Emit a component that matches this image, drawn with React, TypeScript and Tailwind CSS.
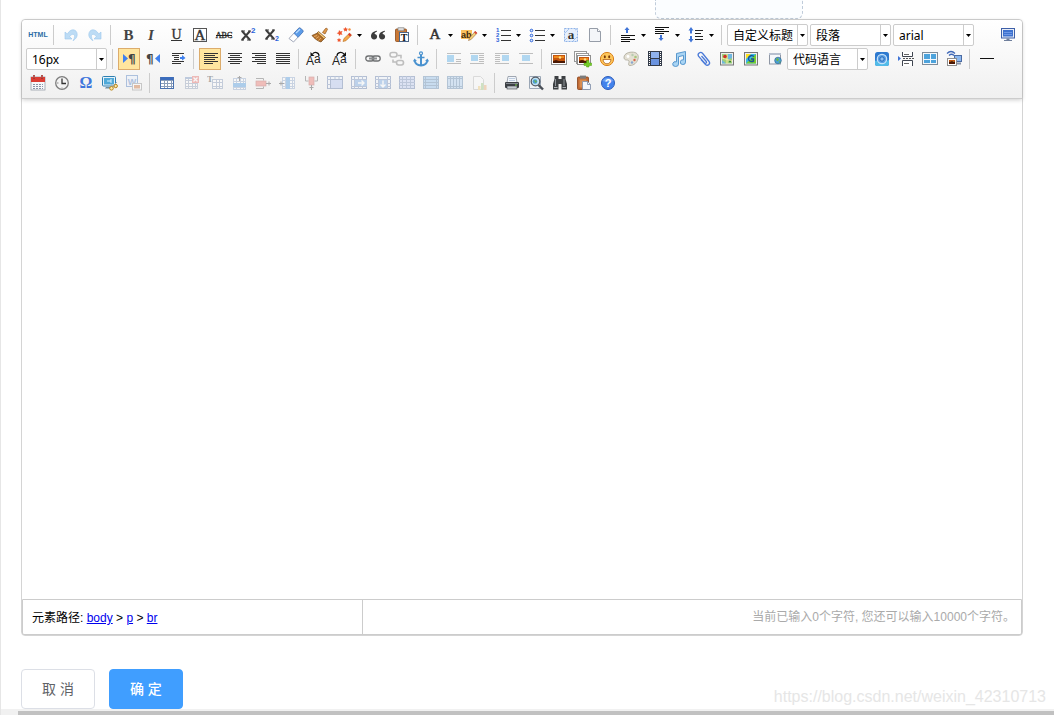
import React, { useState } from "react";
import clsx from "clsx";

type IconMap = Record<string, React.ReactNode>;

const serif = '"Liberation Serif", serif';
const sans = '"Liberation Sans", sans-serif';

// Horizontal 1px strokes, given as [x, y, width]
const Lines = ({ rows, color = "#333" }: { rows: number[][]; color?: string }) => (
  <>
    {rows.map(([x, y, w], i) => (
      <rect key={i} x={x} y={y} width={w} height={1} fill={color} />
    ))}
  </>
);

// Base sheet shared by the table commands
const Sheet = ({ x = 2, y = 2, w = 14, h = 12, cols = 4, rows = 4, fill = "#fff", line = "#5b7fb5" }) => (
  <>
    <rect x={x + 0.5} y={y + 0.5} width={w - 1} height={h - 1} fill={fill} stroke={line} />
    {Array.from({ length: cols - 1 }, (_, i) => {
      const px = x + Math.round(((i + 1) * w) / cols) + 0.5;
      return <path key={`c${i}`} d={`M${px} ${y}V${y + h}`} stroke={line} />;
    })}
    {Array.from({ length: rows - 1 }, (_, i) => {
      const py = y + Math.round(((i + 1) * h) / rows) + 0.5;
      return <path key={`r${i}`} d={`M${x} ${py}H${x + w}`} stroke={line} />;
    })}
  </>
);

// Outer frame with a thin header row, used by the merge and split commands
const Frame = ({ fill = "#eef4ff" }) => (
  <>
    <rect x=".5" y="1.5" width="15" height="12" fill={fill} stroke="#3f5f98" />
    <path d="M0 4.5h16M3.5 1v13" stroke="#5a78ad" />
  </>
);

const Sunset = ({ x, y, w = 15, h = 11 }: { x: number; y: number; w?: number; h?: number }) => (
  <g>
    <rect x={x + 0.5} y={y + 0.5} width={w - 1} height={h - 1} fill="#fff" stroke="#8f8f8f" />
    <rect x={x + 2} y={y + 2} width={w - 4} height={h - 4} fill="#c4560f" />
    <rect x={x + 3} y={y + 3} width={w - 6} height={2} fill="#f08a1c" />
    <circle cx={x + w / 2 + 1} cy={y + 4.5} r={1.2} fill="#ffe08a" />
    <path d={`M${x + 2} ${y + h - 4}l3 -1 3 1h${w - 10}v2H${x + 2}z`} fill="#4a1703" />
  </g>
);

const icons: IconMap = {
  undo: (
    <path d="M2 5v7h7L6.700 9.600C8.500 6.500 11.800 6.500 11.600 9.500c-.1 1.600-.7 2.900-1.600 4.200 3.500-2 5-5.200 3.800-8.200C12.300 1.800 7.500 1.500 4.300 7z" fill="#bddcf5" stroke="#9cc8ec" strokeWidth=".6" />
  ),
  redo: (
    <path d="M14 5v7H7l2.300-2.400C7.500 6.500 4.200 6.500 4.400 9.500c.1 1.600.7 2.900 1.600 4.200C2.500 11.700 1 8.500 2.200 5.500 3.700 1.800 8.500 1.500 11.700 7z" fill="#bddcf5" stroke="#9cc8ec" strokeWidth=".6" />
  ),
  bold: <text x="8.500" y="13" textAnchor="middle" fontFamily={serif} fontWeight="700" fontSize="15" fill="#444">B</text>,
  italic: <text x="7" y="13" textAnchor="middle" fontFamily={serif} fontStyle="italic" fontWeight="700" fontSize="15" fill="#444">I</text>,
  underline: (
    <>
      <text x="8.500" y="12" textAnchor="middle" fontFamily={serif} fontSize="14" fill="#333" stroke="#333" strokeWidth=".3">U</text>
      <rect x="3" y="13" width="11" height="1" fill="#333" />
    </>
  ),
  fontborder: (
    <>
      <rect x="1.500" y="1.500" width="13" height="13" fill="#fff" stroke="#555" />
      <text x="8" y="13" textAnchor="middle" fontFamily={serif} fontSize="15" fill="#333" stroke="#333" strokeWidth=".4">A</text>
    </>
  ),
  strike: (
    <>
      <text x="8" y="11" textAnchor="middle" fontFamily={serif} fontSize="8" fill="#333" stroke="#333" strokeWidth=".4">ABC</text>
      <rect x="0" y="8" width="16" height="1" fill="#222" />
    </>
  ),
  superscript: (
    <>
      <path d="M2 4l8 9M10 4l-8 9" stroke="#3c3c3c" strokeWidth="2" />
      <path d="M1 4h4M8 4h3M1 13h3M7 13h4" stroke="#3c3c3c" />
      <text x="11" y="6" fontFamily={sans} fontWeight="700" fontSize="8" fill="#2b62d9">2</text>
    </>
  ),
  subscript: (
    <>
      <path d="M2 3l8 9M10 3l-8 9" stroke="#3c3c3c" strokeWidth="2" />
      <path d="M1 3h4M8 3h3M1 12h3M7 12h4" stroke="#3c3c3c" />
      <text x="11" y="14" fontFamily={sans} fontWeight="700" fontSize="7" fill="#2b62d9">2</text>
    </>
  ),
  eraser: (
    <g strokeWidth=".8">
      <path d="M1 11.500L10.500 1.300q1-.8 2 0l2 2q.8 1 0 2L5.500 15z" fill="#fff" stroke="#8a93a8" />
      <path d="M6 6.300L10.700 1.300q1-.8 2 0l2 2q.8 1 0 2l-4.600 5z" fill="#5b9be8" stroke="#4677be" />
      <path d="M8 6l4-3.800" stroke="#b8dcff" strokeWidth="1.200" />
    </g>
  ),
  formatmatch: (
    <g>
      <path d="M10.500 5.500L13.500 1.500q1.500-1 2 .8L13 7z" fill="#e19a4a" stroke="#8f541d" strokeWidth=".7" />
      <path d="M6.500 4.500l7 6-1.800 1.700-6.700-6z" fill="#f3c676" stroke="#7d4a18" strokeWidth=".7" />
      <path d="M5.500 6L0 8.500c2.500 3 5.500 5.500 9 6.500l2.800-3z" fill="#b9742d" stroke="#70400f" strokeWidth=".7" />
      <path d="M2 9.500l3-1M4 11.500l3-2M6.500 13.500l2.500-2.500" stroke="#e9b673" strokeWidth=".8" />
    </g>
  ),
  autotypeset: (
    <g>
      <path d="M7 14.500l1-3 5.500-5.300 2 2L10 13.700z" fill="#f6a94b" stroke="#b56d1e" strokeWidth=".6" />
      <path d="M12 7.500l1.500-1.500 2 2L14 9.500z" fill="#d83a2a" />
      <g fill="#f0552d">
        <path d="M3 3l1.300 1.600L6.500 4l-1 2 1 1.800-2.200-.4L3 9l-.3-2L.6 6.200l2-1z" />
        <path d="M9.500 0l.8 1.500 1.700.2-1.200 1.200.3 1.700-1.600-.8-1.500.8.3-1.700L7 1.700l1.700-.2z" />
        <path d="M3 11l.8 1.200 1.500.2-1 1 .2 1.500-1.500-.6-1.300.6.2-1.500-1-1 1.400-.2z" />
      </g>
      <circle cx="13.500" cy="2.500" r="1.200" fill="#f28b3a" />
    </g>
  ),
  blockquote: (
    <g fill="#3c3c3c">
      <path d="M7 3.800C3.200 4.300 1 6.400 1 9.300c0 2 1.300 3.200 3.100 3.200 1.700 0 3-1.200 3-2.800 0-1.500-1.100-2.500-2.600-2.600C4.800 6 5.600 5 7 4.500z" />
      <path d="M15 3.800c-3.800.5-6 2.600-6 5.500 0 2 1.300 3.200 3.100 3.200 1.700 0 3-1.200 3-2.800 0-1.500-1.100-2.500-2.600-2.600.3-1.100 1.100-2.100 2.500-2.600z" />
    </g>
  ),
  pasteplain: (
    <g>
      <rect x="1.500" y="2" width="11" height="12.500" rx="1" fill="#c97835" stroke="#8a4a1a" strokeWidth=".8" />
      <rect x="4" y=".8" width="6" height="3" fill="#dcdcdc" stroke="#777" strokeWidth=".6" />
      <rect x="5.500" y="5.500" width="9" height="9" fill="#fff" stroke="#4d6688" />
      <text x="10" y="13.500" textAnchor="middle" fontFamily={serif} fontWeight="700" fontSize="10" fill="#111">T</text>
    </g>
  ),
  forecolor: <text x="8" y="12" textAnchor="middle" fontFamily={serif} fontSize="15" fill="#333" stroke="#333" strokeWidth=".5">A</text>,
  backcolor: (
    <g>
      <rect x="0" y="3" width="11" height="9" fill="#fbc15e" />
      <text x="0" y="11" fontFamily={sans} fontWeight="700" fontSize="9" fill="#3b2a10">ab</text>
      <path d="M7.500 13.500l1-2.500 5.500-6.500 2 1.700-5.800 6.200z" fill="#f4d27a" stroke="#9a6a3a" strokeWidth=".6" />
      <path d="M13 5.500l1.200-1.500 2 1.700-1.200 1.500z" fill="#d9473b" />
    </g>
  ),
  orderedlist: (
    <>
      <g fontFamily={sans} fontWeight="700" fontSize="6" fill="#2b62d9">
        <text x="1" y="5">1</text>
        <text x="1" y="10">2</text>
        <text x="1" y="15">3</text>
      </g>
      <Lines rows={[[6, 3, 10], [6, 8, 10], [6, 13, 10]]} />
    </>
  ),
  unorderedlist: (
    <>
      {[3, 8, 13].map((cy) => (
        <circle key={cy} cx="2.500" cy={cy + 0.5} r="1.300" fill="#dbe8ff" stroke="#2b62d9" />
      ))}
      <Lines rows={[[6, 3, 10], [6, 8, 10], [6, 13, 10]]} />
    </>
  ),
  selectall: (
    <>
      <rect x="1.500" y="1.500" width="13" height="13" fill="#e6effc" stroke="#8fb3e8" strokeDasharray="2 1" />
      <path d="M2 6l4-4M10 14l4-4M2 13l2-2M12 3l2-1" stroke="#a7c4ee" />
      <text x="8" y="12" textAnchor="middle" fontFamily={serif} fontWeight="700" fontSize="13" fill="#333">a</text>
    </>
  ),
  cleardoc: (
    <g>
      <path d="M2.500 1.500h8l3 3v10h-11z" fill="#f4f6f9" stroke="#969da8" />
      <path d="M10.500 1.500v3h3" fill="#fff" stroke="#969da8" />
    </g>
  ),
  rowspacingtop: (
    <>
      <path d="M7 0l2.500 3H8v3H6V3H4.500z" fill="#3f74d6" />
      <Lines color="#111" rows={[[1, 8, 14], [1, 10, 9], [1, 12, 14], [1, 14, 9]]} />
    </>
  ),
  rowspacingbottom: (
    <>
      <Lines color="#111" rows={[[1, 0, 14], [1, 2, 9], [1, 4, 14], [1, 6, 9]]} />
      <path d="M7 14l2.500-3H8V8H6v3H4.500z" fill="#3f74d6" />
    </>
  ),
  lineheight: (
    <>
      <path d="M3 0l2.500 3.500H4v3H2v-3H.5zM3 15.500L5.500 12H4V9H2v3H.5z" fill="#3f74d6" />
      <Lines color="#222" rows={[[7, 3, 8], [7, 6, 6], [7, 9, 8], [7, 12, 8]]} />
    </>
  ),
  fullscreen: (
    <g>
      <rect x="1.500" y="1.500" width="13" height="9.500" fill="#e8edf6" stroke="#3d5fa8" />
      <rect x="3" y="3" width="10" height="6.500" fill="#3f72cf" />
      <path d="M4 5.500h8M4 7.500h8" stroke="#6d97e6" />
      <path d="M6.500 11.500h3v1.500h2.500v1H4v-1h2.500z" fill="#6f7f9c" />
    </g>
  ),
  ltr: (
    <>
      <path d="M1 3v9l5-4.500z" fill="#3f80ee" />
      <text x="6" y="12" fontFamily='"DejaVu Sans", sans-serif' fontWeight="700" fontSize="12" fill="#444">¶</text>
    </>
  ),
  rtl: (
    <>
      <text x="0" y="12" fontFamily='"DejaVu Sans", sans-serif' fontWeight="700" fontSize="12" fill="#444">¶</text>
      <path d="M14 3v9l-5-4.500z" fill="#3f80ee" />
    </>
  ),
  indent: (
    <>
      <Lines rows={[[2, 2, 12], [2, 4, 7], [4, 6, 5], [4, 8, 5], [2, 10, 12], [2, 12, 9]]} />
      <path d="M10 6h2V4l3.500 3L12 9.500V8h-2z" fill="#3f80ee" />
    </>
  ),
  justifyleft: <Lines rows={[[1, 2, 14], [1, 4, 11], [1, 6, 14], [1, 8, 11], [1, 10, 14], [1, 12, 9]]} />,
  justifycenter: <Lines rows={[[1, 2, 14], [3, 4, 10], [1, 6, 14], [3, 8, 10], [1, 10, 14], [3, 12, 10]]} />,
  justifyright: <Lines rows={[[1, 2, 14], [4, 4, 11], [1, 6, 14], [4, 8, 11], [1, 10, 14], [6, 12, 9]]} />,
  justifyfull: <Lines rows={[[1, 2, 14], [1, 4, 14], [1, 6, 14], [1, 8, 14], [1, 10, 14], [1, 12, 14]]} />,
  touppercase: (
    <g fontFamily={sans} fill="#222">
      <text x="-2" y="14" fontSize="12">A</text>
      <text x="6" y="12" fontSize="12">a</text>
      <path d="M11 5C11 1 6.500 .5 4.500 3" fill="none" stroke="#111" strokeWidth="1.200" />
      <path d="M2.500 1v4h4z" fill="#111" />
    </g>
  ),
  tolowercase: (
    <g fontFamily={sans} fill="#222">
      <text x="0" y="14" fontSize="12">A</text>
      <text x="8" y="12" fontSize="12">a</text>
      <path d="M5 5C5 1 9.500 .5 12 3" fill="none" stroke="#111" strokeWidth="1.200" />
      <path d="M14 1v4h-4z" fill="#111" />
    </g>
  ),
  link: (
    <g fill="none" stroke="#6e7072" strokeWidth="1.300">
      <rect x=".8" y="5" width="8" height="5" rx="2.500" />
      <rect x="7.200" y="5" width="8" height="5" rx="2.500" />
      <path d="M4 7.500h8" stroke="#8c8e90" strokeWidth="2" />
    </g>
  ),
  unlink: (
    <g fill="none" stroke="#555" strokeWidth="1.600">
      <rect x="1" y="1.500" width="7" height="4.500" rx="2.200" />
      <rect x="7.500" y="9.500" width="7" height="4.500" rx="2.200" />
      <path d="M4 8.500v2.500h3M8.500 4.500H12v3" />
    </g>
  ),
  anchor: (
    <g fill="none" stroke="#4a92cf">
      <circle cx="8" cy="2.300" r="1.500" strokeWidth="1.200" />
      <path d="M8 4v10.500" strokeWidth="2" />
      <path d="M4.500 6.500h7" strokeWidth="1.500" />
      <path d="M1.500 9c.5 3.500 3 5.300 6.500 5.500 3.500-.2 6-2 6.500-5.500" strokeWidth="1.800" />
      <path d="M0 10.500L1.500 7.500 4 10zM16 10.500l-1.500-3L12 10z" fill="#4a92cf" stroke="none" />
    </g>
  ),
  imagenone: (
    <>
      <Lines color="#555" rows={[[1, 2, 14], [10, 8, 5], [10, 10, 5], [1, 12, 14]]} />
      <rect x="1" y="4" width="7" height="7" fill="#2f9be4" />
    </>
  ),
  imageleft: (
    <>
      <Lines color="#555" rows={[[0, 2, 14], [9, 4, 5], [9, 6, 5], [9, 8, 5], [9, 10, 5], [0, 12, 14]]} />
      <rect x="1" y="4" width="7" height="6" fill="#2f9be4" />
    </>
  ),
  imageright: (
    <>
      <Lines color="#555" rows={[[1, 2, 14], [1, 4, 5], [1, 6, 5], [1, 8, 5], [1, 10, 5], [1, 12, 14]]} />
      <rect x="8" y="4" width="7" height="6" fill="#2f9be4" />
    </>
  ),
  imagecenter: (
    <>
      <Lines color="#555" rows={[[1, 2, 14], [1, 12, 14]]} />
      <rect x="4" y="4" width="8" height="6" fill="#2f9be4" />
    </>
  ),
  simpleupload: <Sunset x={0} y={2} w={16} h={12} />,
  insertimage: (
    <>
      <rect x="-.5" y=".5" width="12" height="10" fill="#fff" stroke="#999" />
      <rect x="1.500" y="2.500" width="12" height="10" fill="#fff" stroke="#999" />
      <Sunset x={2} y={4} w={14} h={10} />
      <path d="M11.500 9.500h2.500V12h2.500v2.500H14V16h-2.500v-1.500H9V12h2.500z" fill="#74cc26" stroke="#4f9c12" strokeWidth=".5" />
    </>
  ),
  emotion: (
    <g>
      <circle cx="8" cy="8" r="6.600" fill="#fdc65b" stroke="#d9801b" />
      <path d="M4 8.500h8c-.2 2.600-2 4.300-4 4.300s-3.800-1.700-4-4.300z" fill="#fff" stroke="#a5520c" strokeWidth=".7" />
      <ellipse cx="5.800" cy="5.800" rx="1" ry="1.500" fill="#7a3a06" />
      <ellipse cx="10.200" cy="5.800" rx="1" ry="1.500" fill="#7a3a06" />
    </g>
  ),
  scrawl: (
    <g>
      <path d="M1 6C1.500 2.500 6 .7 10.500 1.200 14.500 1.700 16 4.500 15 8c-1 3.500-4 6.500-8 6.500-2 0-1.500-1.800-1-3.200C6.500 9.500 5 9 3.500 9 1.800 9 .8 7.700 1 6z" fill="#e4e0d3" stroke="#aaa798" strokeWidth=".8" />
      <circle cx="5" cy="5.500" r="1.400" fill="#fff" />
      <circle cx="9.500" cy="4" r="1.200" fill="#b9ccb0" />
      <circle cx="12.500" cy="6" r="1.300" fill="#a8c67c" />
      <circle cx="11.500" cy="9" r="1.200" fill="#d9664d" />
      <circle cx="9" cy="11.500" r="1.200" fill="#8aa7cf" />
    </g>
  ),
  insertvideo: (
    <g>
      <rect x="1" y="0" width="14" height="15" fill="#333b49" />
      <path d="M2.500 1v14M13.500 1v14" stroke="#fff" strokeDasharray="1 1" />
      <rect x="4" y="1" width="8" height="6" fill="#8fb2ee" />
      <rect x="4" y="8" width="8" height="6" fill="#6a93df" />
    </g>
  ),
  music: (
    <path d="M5.500 2.500l9-2v10.500a2.600 2.400 0 1 1-2-2.200V4.500l-5 1.200V13a2.900 2.400 0 1 1-2-2.200z" fill="#a9d4f3" stroke="#4b8fca" strokeWidth=".9" />
  ),
  attachment: (
    <g fill="none" stroke="#4a7ad8" strokeWidth="1.300">
      <path d="M6 8.500l4.500 5c2.200 2 5.200-.6 3.600-3L7.500 2.300C5.500.3 2 2.500 3.500 5.200l6 6.800c1.200 1 2.700-.2 1.800-1.500L6.500 5" />
    </g>
  ),
  map: (
    <g>
      <rect x="1.500" y="1.500" width="13" height="12.500" fill="#eee" stroke="#777" />
      <rect x="3" y="3" width="10" height="9.500" fill="#9fd07a" />
      <path d="M9 3h4v4L9 9zM3 9l4 3.500H3z" fill="#6fb6e0" />
      <path d="M3 7l10 3M8 3v9.500" stroke="#f8e9a0" />
      <circle cx="6" cy="5.500" r="1.800" fill="#d22f27" />
      <circle cx="11" cy="10.500" r="1" fill="#2d7f38" />
    </g>
  ),
  gmap: (
    <g>
      <rect x="1.500" y="1.500" width="13" height="12.500" fill="#eee" stroke="#777" />
      <rect x="3" y="3" width="10" height="9.500" fill="#38b7e8" />
      <path d="M3 12.500L13 3v9.500z" fill="#76cf2d" />
      <path d="M3 3h5L3 8z" fill="#ffe11a" />
      <path d="M11 5.500c-2-1.500-5-1-5.500 1.800C5.200 10 8 11.200 10.500 10V8H8" fill="none" stroke="#1a5299" strokeWidth="1.400" />
    </g>
  ),
  insertframe: (
    <g>
      <rect x="2.500" y="2.500" width="11" height="10.500" fill="#f6f8fb" stroke="#8f97a5" />
      <path d="M2 3h12" stroke="#b7c0cf" strokeWidth="2" />
      <circle cx="11" cy="9.500" r="3.300" fill="#4aa0d8" stroke="#33688f" strokeWidth=".7" />
      <path d="M9 8l2-1 1 2-2 1.500zM11.500 11l2-1-.5 2z" fill="#6bb544" />
    </g>
  ),
  webapp: (
    <g>
      <rect x="1" y="1" width="14" height="14" rx="2.500" fill="#2d79cf" />
      <path d="M1 10c3-2 5 3 14-1v3.500A2.500 2.500 0 0 1 12.500 15h-9A2.500 2.500 0 0 1 1 12.500z" fill="#52bbe8" />
      <circle cx="8" cy="8" r="4.700" fill="#5a9fe4" stroke="#c4e2fa" strokeWidth="1.200" />
      <circle cx="8" cy="8" r="2.200" fill="#8cc1f3" stroke="#2465b5" />
    </g>
  ),
  pagebreak: (
    <g fill="none">
      <path d="M4.500 1v4.500h10V1M4.500 15V9.500h10V15" fill="#fff" stroke="#3f4550" />
      <path d="M6 3.500h5M6 12.500h5" stroke="#666" />
      <path d="M5 7.500h11" stroke="#555" strokeDasharray="2 1" />
      <path d="M0 5l3 2.500L0 10z" fill="#3f74d6" />
    </g>
  ),
  template: (
    <g>
      <rect x=".5" y="1.500" width="15" height="12" fill="#f3f8fc" stroke="#7f8c99" />
      <path d="M2 3h6v5H2zM9 3h5v5H9zM2 9h6v3H2zM9 9h5v3H9z" fill="#4da3dc" />
    </g>
  ),
  background: (
    <g>
      <path d="M1 2.500Q5-1.500 9 2.500M3 4.500q2.500-2.500 5 0" fill="none" stroke="#4069b8" strokeWidth="1.200" />
      <rect x="8.500" y="4.500" width="7" height="6" fill="#8cb8ee" stroke="#4b6ba3" />
      <path d="M11 12.500h4" stroke="#8793a8" strokeWidth="2" />
      <Sunset x={1} y={7} w={10} h={8} />
    </g>
  ),
  horizontal: <rect x="1" y="7" width="14" height="1" fill="#111" />,
  date: (
    <g>
      <rect x="1" y="2" width="14" height="13" fill="#f6f7fa" stroke="#9aa0ab" strokeWidth=".8" />
      <rect x="1" y="2" width="14" height="5" fill="#dc3d34" />
      <path d="M4 0v4M12 0v4" stroke="#8d1a15" strokeWidth="1.600" />
      <path d="M4 .5v3M12 .5v3" stroke="#f7b0aa" strokeWidth=".6" />
      <path d="M3 9.500h10M3 11.500h10M3 13.500h10" stroke="#8b95a8" strokeDasharray="2 1" />
    </g>
  ),
  time: (
    <g>
      <circle cx="8" cy="8" r="6.300" fill="#f3f3f3" stroke="#7d7d7d" strokeWidth="1.300" />
      <path d="M8 3.500v5h4" fill="none" stroke="#333" strokeWidth="1.300" />
      <path d="M8 12.500v1M3 8h1.500" stroke="#888" />
    </g>
  ),
  spechars: (
    <text x="8" y="13" textAnchor="middle" fontFamily={serif} fontWeight="700" fontSize="16" fill="#3f76dc">Ω</text>
  ),
  snapscreen: (
    <g>
      <rect x=".5" y="1.500" width="13" height="9.500" rx="1" fill="#e6f2fa" stroke="#2e7fb0" />
      <rect x="2" y="3" width="10" height="6.500" fill="#4fa9d8" />
      <path d="M5 6h4V4M9 6v2" stroke="#d8f1ff" fill="none" />
      <path d="M4 12h5v1.500H3z" fill="#6f8fa5" />
      <path d="M15 7l-5 5M9 9.500l5 3" stroke="#a8b0b8" />
      <circle cx="9.500" cy="13.300" r="1.800" fill="#ffe8a8" stroke="#b98618" />
      <circle cx="13.700" cy="11" r="1.700" fill="#ffe8a8" stroke="#b98618" />
    </g>
  ),
  wordimage: (
    <g>
      <rect x=".5" y=".5" width="11" height="11" fill="#e4efff" stroke="#2c63b4" />
      <text x="6" y="9.500" textAnchor="middle" fontFamily={sans} fontWeight="700" fontSize="9" fill="#2c63b4">W</text>
      <rect x="6.500" y="8.500" width="9" height="6.500" fill="#fff" stroke="#777" />
      <rect x="8" y="10" width="6" height="3.500" fill="#c4560f" />
    </g>
  ),
  inserttable: (
    <>
      <Sheet x={1} w={14} cols={4} rows={4} line="#8a9db8" />
      <rect x="1" y="2" width="14" height="3" fill="#3b6cbc" />
      <path d="M1.500 2v12M14.500 2v12M1 13.500h14" stroke="#4a72b0" />
    </>
  ),
  deletetable: (
    <>
      <Sheet w={13} line="#7a8cab" />
      <rect x="2" y="2" width="13" height="2" fill="#5b7fb5" />
      <rect x="9" y="1" width="7" height="7" fill="#e2504a" />
      <path d="M10.500 2.500l4 4M14.500 2.500l-4 4" stroke="#fff" strokeWidth="1.300" />
    </>
  ),
  beforetable: (
    <>
      <text x="0" y="7" fontFamily={serif} fontWeight="700" fontSize="9" fill="#111">T</text>
      <Sheet x={5} y={4} w={11} h={10} cols={3} rows={3} line="#6f86ad" />
    </>
  ),
  insertrow: (
    <>
      <Sheet y={3} w={13} h={12} line="#7d99c4" />
      <rect x="2" y="8" width="13" height="4" fill="#2d87dc" />
      <path d="M8.500 6V1M6.500 2.500h4" stroke="#222" />
    </>
  ),
  deleterow: (
    <>
      <path d="M1 3.500h7.500v2M1 13.500h7.500v-2" fill="none" stroke="#444" />
      <rect x="1" y="6" width="10" height="5" fill="#ea5a50" stroke="#a3302a" strokeWidth=".7" />
      <path d="M11 8.500h5M14 6.500v4" stroke="#222" />
    </>
  ),
  insertcol: (
    <>
      <Sheet x={3} w={13} line="#7d99c4" />
      <rect x="7" y="2" width="4" height="12" fill="#2d87dc" />
      <path d="M5 8.500H0M2 6.500v4" stroke="#222" />
    </>
  ),
  deletecol: (
    <>
      <path d="M2.500 1v5h3M14.500 1v5h-3" fill="none" stroke="#444" />
      <rect x="6" y="2" width="5" height="8" fill="#ea5a50" stroke="#a3302a" strokeWidth=".7" />
      <path d="M8.500 10v5M6.500 12.500h4" stroke="#222" />
    </>
  ),
  mergecells: (
    <>
      <Frame />
      <path d="M8 1v3M12 1v3M0 9.500h3" stroke="#5a78ad" />
      <rect x="3.500" y="4.500" width="12" height="9" fill="#a3b8ee" stroke="#3f5f98" />
    </>
  ),
  mergeright: (
    <>
      <Frame />
      <path d="M7.500 1v13M11.500 1v13M0 11.500h16" stroke="#5a78ad" />
      <rect x="4" y="5" width="12" height="6" fill="#5795dd" />
      <path d="M7 8h6M10.500 5.500L13 8l-2.500 2.500" fill="none" stroke="#fff" strokeWidth="1.400" />
    </>
  ),
  mergedown: (
    <>
      <Frame />
      <path d="M12.500 1v13M0 8.500h16M0 11.500h16" stroke="#5a78ad" />
      <rect x="4" y="5" width="8" height="8" fill="#5795dd" />
      <path d="M8 5.500V12M5.500 9.500L8 12l2.500-2.500" fill="none" stroke="#fff" strokeWidth="1.400" />
    </>
  ),
  splitcells: (
    <>
      <Frame fill="#b3c4f2" />
      <path d="M7.500 1v13M11.500 1v13M0 7.500h16M0 10.500h16" stroke="#5a78ad" />
    </>
  ),
  splitrows: (
    <>
      <rect x=".5" y="1.500" width="15" height="12" fill="#7ab3ea" stroke="#3f6f9f" />
      <path d="M0 4.500h16M0 7.500h16M0 10.500h16M2.500 1v13M13.500 1v13" stroke="#3f6f9f" />
    </>
  ),
  splitcols: (
    <>
      <rect x=".5" y="1.500" width="15" height="12" fill="#9cc5ee" stroke="#3f6f9f" />
      <path d="M3.500 1v13M6.500 1v13M9.500 1v13M12.500 1v13M0 3.500h16M0 11.500h16" stroke="#3f6f9f" />
    </>
  ),
  charts: (
    <g opacity=".8">
      <path d="M2.500 1.500h7l3 3v10h-10z" fill="#fff" stroke="#999" />
      <rect x="7" y="11" width="2.500" height="4" fill="#efb73e" />
      <rect x="10" y="8" width="2.500" height="7" fill="#74b84a" />
      <rect x="13" y="10" width="2.500" height="5" fill="#e58b32" />
    </g>
  ),
  print: (
    <g>
      <path d="M4 1.500h8l1 6H3z" fill="#f2f6fb" stroke="#8a93a0" strokeWidth=".8" />
      <path d="M5 3.500h6M5 5.500h6" stroke="#bccbdf" />
      <rect x="1" y="7" width="14" height="6" rx="1" fill="#3c4045" />
      <rect x="2" y="8" width="12" height="1" fill="#83888f" />
      <rect x="3" y="11" width="10" height="3" fill="#c5cad1" stroke="#3c4045" strokeWidth=".6" />
      <rect x="11" y="9.500" width="2" height="1" fill="#7bd14b" />
    </g>
  ),
  preview: (
    <g>
      <path d="M1.500 1.500h11v12h-11z" fill="#eef2f7" stroke="#9aa6b5" />
      <circle cx="7.500" cy="6.500" r="4.300" fill="#bfe3f5" stroke="#555c66" strokeWidth="1.300" />
      <circle cx="7" cy="6.500" r="2.300" fill="#4b9cd2" />
      <path d="M6 5l3 1-1.500 2z" fill="#6cb54a" />
      <path d="M10.500 10l4.500 4.500" stroke="#4a4f57" strokeWidth="2.400" />
    </g>
  ),
  searchreplace: (
    <g fill="#3d4043">
      <path d="M2.500 1h4v3h3V1h4v3l1.500 5v5.500H9.500V9h-3v5.500H1V9l1.500-5z" />
      <path d="M3.500 4v7M12 4v7" stroke="#8f9499" />
      <path d="M2 12.500h3.500M10.500 12.500H14" stroke="#a9adb2" />
    </g>
  ),
  pasteword: (
    <g>
      <rect x="1.500" y="2" width="11" height="12.500" rx="1" fill="#c06a35" stroke="#874018" strokeWidth=".8" />
      <rect x="4" y=".6" width="6" height="3" fill="#7c7c7c" />
      <rect x="3.500" y="4.500" width="7" height="8" fill="#d88c50" />
      <path d="M6.500 6.500h5l3 3v5h-8z" fill="#f4f7fc" stroke="#8895ad" strokeWidth=".9" />
      <path d="M11.500 6.500v3h3" fill="none" stroke="#8895ad" strokeWidth=".9" />
    </g>
  ),
  help: (
    <g>
      <circle cx="8" cy="8" r="6.500" fill="#4383ec" stroke="#2d5dbb" />
      <path d="M2.500 6a6 5 0 0 1 11 0q-5.500 2-11 0z" fill="#6c9ff2" />
      <text x="8" y="12" textAnchor="middle" fontFamily={sans} fontWeight="700" fontSize="11" fill="#fff">?</text>
    </g>
  ),
};

interface ToolButtonProps {
  name: string;
  menu?: boolean;
  active?: boolean;
  disabled?: boolean;
  onClick?: () => void;
}

const ToolButton = ({ name, menu, active, disabled, onClick }: ToolButtonProps) => (
  <button
    type="button"
    aria-label={name}
    disabled={disabled}
    onClick={onClick}
    className={clsx(
      "flex h-[22px] shrink-0 items-center border pl-[3px]",
      menu ? "w-8" : "w-[22px]",
      active ? "border-[#dcac6c] bg-[#ffe69f]" : "border-transparent",
      disabled && "opacity-35"
    )}
  >
    <svg width="16" height="16" viewBox="0 0 16 16" className="shrink-0 overflow-visible">
      {icons[name]}
    </svg>
    {menu && (
      <svg width="5" height="3" viewBox="0 0 5 3" className="mt-px ml-[5px] shrink-0">
        <path d="M0 0h5L2.500 3z" fill="#000" />
      </svg>
    )}
  </button>
);

const Separator = () => <div className="mx-[3px] h-5 w-px shrink-0 bg-[#ccc]" />;

const Combo = ({ label, options }: { label: string; options: string[] }) => (
  <div className="relative h-[22px] w-[81px] shrink-0 rounded-xs border border-[#ccc] bg-white">
    <select
      aria-label={label}
      className="block h-5 w-full appearance-none bg-transparent pt-px pl-[5px] font-['Noto_Sans','Noto_Sans_CJK_SC',sans-serif] text-xs leading-5 text-black outline-none"
    >
      {options.map((option) => (
        <option key={option}>{option}</option>
      ))}
    </select>
    <span className="pointer-events-none absolute inset-y-0 right-0 flex w-[10px] items-center justify-center border-l border-[#ccc]">
      <svg width="5" height="3" viewBox="0 0 5 3">
        <path d="M0 0h5L2.500 3z" fill="#000" />
      </svg>
    </span>
  </div>
);

// Shorthand for a run of plain buttons
const Buttons = ({ names, disabled }: { names: string[]; disabled?: boolean }) => (
  <>
    {names.map((name) => (
      <ToolButton key={name} name={name} disabled={disabled} />
    ))}
  </>
);

const Menus = ({ names }: { names: string[] }) => (
  <>
    {names.map((name) => (
      <ToolButton key={name} name={name} menu />
    ))}
  </>
);

const Toolbar = () => {
  const [direction, setDirection] = useState("ltr");
  const [align, setAlign] = useState("justifyleft");

  return (
    <div className="flex flex-col gap-[2px] rounded-t border-b border-[#ccc] bg-gradient-to-b from-white to-[#f0f0f0] px-1 pt-1 pb-1 shadow-[0_1px_4px_rgba(0,0,0,0.2)]">
      <div className="flex items-center gap-[2px]">
        <button
          type="button"
          className="flex h-[22px] w-[22px] shrink-0 items-center justify-center border border-transparent"
        >
          <svg width="20" height="16" viewBox="0 0 20 16" className="shrink-0 overflow-visible">
            <text x="11" y="10" textAnchor="middle" fontFamily={sans} fontWeight="700" fontSize="7" fill="#2c6ca5">HTML</text>
          </svg>
        </button>
        <Separator />
        <Buttons names={["undo", "redo"]} />
        <Separator />
        <Buttons names={["bold", "italic", "underline", "fontborder", "strike", "superscript", "subscript", "eraser", "formatmatch"]} />
        <Menus names={["autotypeset"]} />
        <Buttons names={["blockquote", "pasteplain"]} />
        <Separator />
        <Menus names={["forecolor", "backcolor", "orderedlist", "unorderedlist"]} />
        <Buttons names={["selectall", "cleardoc"]} />
        <Separator />
        <Menus names={["rowspacingtop", "rowspacingbottom", "lineheight"]} />
        <Separator />
        <Combo label="自定义标题" options={["自定义标题"]} />
        <Combo label="段落格式" options={["段落"]} />
        <Combo label="字体" options={["arial"]} />
        <div className="ml-auto flex">
          <ToolButton name="fullscreen" />
        </div>
      </div>

      <div className="flex items-center gap-[2px]">
        <Combo label="字号" options={["16px"]} />
        <Separator />
        {["ltr", "rtl"].map((name) => (
          <ToolButton key={name} name={name} active={direction === name} onClick={() => setDirection(name)} />
        ))}
        <ToolButton name="indent" />
        <Separator />
        {["justifyleft", "justifycenter", "justifyright", "justifyfull"].map((name) => (
          <ToolButton key={name} name={name} active={align === name} onClick={() => setAlign(name)} />
        ))}
        <Separator />
        <Buttons names={["touppercase", "tolowercase"]} />
        <Separator />
        <ToolButton name="link" />
        <ToolButton name="unlink" disabled />
        <ToolButton name="anchor" />
        <Separator />
        <Buttons names={["imagenone", "imageleft", "imageright", "imagecenter"]} disabled />
        <Separator />
        <Buttons names={["simpleupload", "insertimage", "emotion", "scrawl", "insertvideo", "music", "attachment", "map", "gmap", "insertframe"]} />
        <Combo label="代码语言" options={["代码语言"]} />
        <Buttons names={["webapp", "pagebreak", "template", "background"]} />
        <Separator />
        <ToolButton name="horizontal" />
      </div>

      <div className="flex items-center gap-[2px]">
        <Buttons names={["date", "time", "spechars", "snapscreen"]} />
        <ToolButton name="wordimage" disabled />
        <Separator />
        <ToolButton name="inserttable" />
        <Buttons
          disabled
          names={["deletetable", "beforetable", "insertrow", "deleterow", "insertcol", "deletecol", "mergecells", "mergeright", "mergedown", "splitcells", "splitrows", "splitcols", "charts"]}
        />
        <Separator />
        <Buttons names={["print", "preview", "searchreplace", "pasteword", "help"]} />
      </div>
    </div>
  );
};

const StatusBar = () => (
  <div className="flex h-9 items-stretch rounded-b-xs border border-[#ccc] text-xs">
    <div className="flex w-[340px] items-center border-r border-[#ccc] pt-[2px] pl-[9px] text-black">
      <p>
        元素路径:{" "}
        <a href="#body" className="text-[#0000ee] underline">body</a> &gt;{" "}
        <a href="#p" className="text-[#0000ee] underline">p</a> &gt;{" "}
        <a href="#br" className="text-[#0000ee] underline">br</a>
      </p>
    </div>
    <div className="flex flex-1 items-center justify-end pr-[6px] text-[#aaa]">
      当前已输入0个字符, 您还可以输入10000个字符。
    </div>
  </div>
);

const App = () => {
  return (
    <div className="relative min-h-screen overflow-hidden border-l border-[#e6e6e6] bg-white font-['Liberation_Sans','Noto_Sans_CJK_SC',sans-serif]">
      {/* Bottom edge of the upload area above the editor */}
      <div className="ml-[654px] h-[19px] w-[148px] rounded-b-md border border-t-0 border-dashed border-[#c0ccda] bg-[#fbfdff]" />

      <div className="mr-[31px] ml-5 rounded border border-[#d4d4d4] bg-white">
        <Toolbar />
        <textarea aria-label="编辑器" className="block h-[500px] w-full resize-none bg-transparent p-2 outline-none" />
        <StatusBar />
      </div>

      <div className="mt-[33px] ml-5 flex gap-[14px] text-sm">
        <button type="button" className="h-10 rounded border border-[#dcdfe6] bg-white px-5 text-[#606266]">
          取 消
        </button>
        <button type="button" className="h-10 rounded border border-[#409eff] bg-[#409eff] px-5 font-medium text-white">
          确 定
        </button>
      </div>

      {/* Horizontal scrollbar */}
      <div className="h-[6px] bg-[#f1f1f1] pt-[2px] pl-[17px]">
        <div className="h-1 bg-[#c1c1c1]" />
      </div>

      <div className="absolute right-2 bottom-2 text-base leading-5 text-[#e6e6e6]">
        https://blog.csdn.net/weixin_42310713
      </div>
    </div>
  );
};

export default App;
